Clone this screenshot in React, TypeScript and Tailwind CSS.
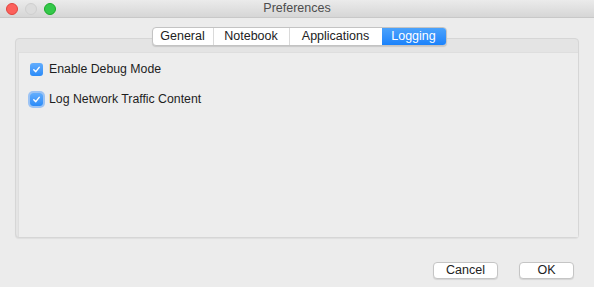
import React from 'react';

const tabs = [
  { name: 'General', w: 'w-[60px]' },
  { name: 'Notebook', w: 'w-[76px]' },
  { name: 'Applications', w: 'w-[93px]' },
  { name: 'Logging', w: 'w-[64px]' },
];

const Check: React.FC<{ label: string; focused?: boolean }> = ({ label, focused }) => (
  <label className="flex items-center gap-[6px]">
    <span
      className={`flex h-[13px] w-[13px] items-center justify-center rounded-[3px] bg-gradient-to-b from-[#62adfd] to-[#2a8bf8] ${
        focused ? 'shadow-[0_0_0_2px_rgba(90,160,250,0.55)]' : ''
      }`}
    >
      <svg width="9" height="9" viewBox="0 0 10 10" fill="none">
        <path d="M2 5.2 L4.2 7.4 L8 2.6" stroke="white" strokeWidth="1.6" strokeLinecap="round" strokeLinejoin="round" />
      </svg>
    </span>
    <span className="text-[12.3px] text-[#1e1e1e]">{label}</span>
  </label>
);

export default function App() {
  return (
    <div className="flex h-[287px] w-[594px] flex-col bg-[#ececec] font-['Liberation_Sans',sans-serif]">
      {/* title bar */}
      <div className="relative flex h-[18px] items-center justify-center border-b border-[#c8c8c8] bg-gradient-to-b from-[#ebebeb] to-[#d6d6d6]">
        <div className="absolute left-[6px] top-[3px] flex gap-[7px]">
          <span className="h-[12px] w-[12px] rounded-full border border-[#e0443e] bg-[#fc605b]" />
          <span className="h-[12px] w-[12px] rounded-full border border-[#cfcfcf] bg-[#dcdcdc]" />
          <span className="h-[12px] w-[12px] rounded-full border border-[#1aab29] bg-[#34c84a]" />
        </div>
        <span className="text-[12.5px] text-[#4d4d4d]">Preferences</span>
      </div>

      <div className="flex flex-1 flex-col px-[15px]">
        {/* tabs */}
        <div className="relative z-10 mt-[9px] flex justify-center pl-[4px]">
          <div className="flex h-[19px] overflow-hidden rounded-[4px] border border-[#c3c3c3] bg-white shadow-[0_1px_1px_rgba(0,0,0,0.12)] text-[12.5px]">
            {tabs.map((t, i) => (
              <div
                key={t.name}
                className={`flex items-center justify-center leading-none ${t.w} ${
                  t.name === 'Logging'
                    ? 'bg-gradient-to-b from-[#4ba2fb] to-[#1a82fb] text-white'
                    : 'text-[#222]'
                } ${i > 0 && t.name !== 'Logging' ? 'border-l border-[#dadada]' : ''}`}
              >
                {t.name}
              </div>
            ))}
          </div>
        </div>

        {/* panel */}
        <div className="-mt-[8px] flex h-[200px] flex-col rounded-[4px] border border-[#d6d6d6] bg-[#e4e4e4] pl-[2px] pt-[13px] shadow-[0_1px_1px_rgba(0,0,0,0.06)]">
          <div className="flex flex-1 flex-col gap-[12px] border-l border-t border-[#dedede] bg-[#ededed] pl-[11px] pt-[7px]">
            <Check label="Enable Debug Mode" />
            <Check label="Log Network Traffic Content" focused />
          </div>
        </div>

        {/* buttons */}
        <div className="mt-[24px] flex justify-end gap-[21px] pr-[5px]">
          <button className="h-[17px] w-[65px] rounded-[4px] border border-[#c5c5c5] bg-white text-[12.5px] leading-none text-[#222] shadow-[0_1px_1px_rgba(0,0,0,0.1)]">
            Cancel
          </button>
          <button className="h-[17px] w-[55px] rounded-[4px] border border-[#c5c5c5] bg-white text-[12.5px] leading-none text-[#222] shadow-[0_1px_1px_rgba(0,0,0,0.1)]">
            OK
          </button>
        </div>
      </div>
    </div>
  );
}
